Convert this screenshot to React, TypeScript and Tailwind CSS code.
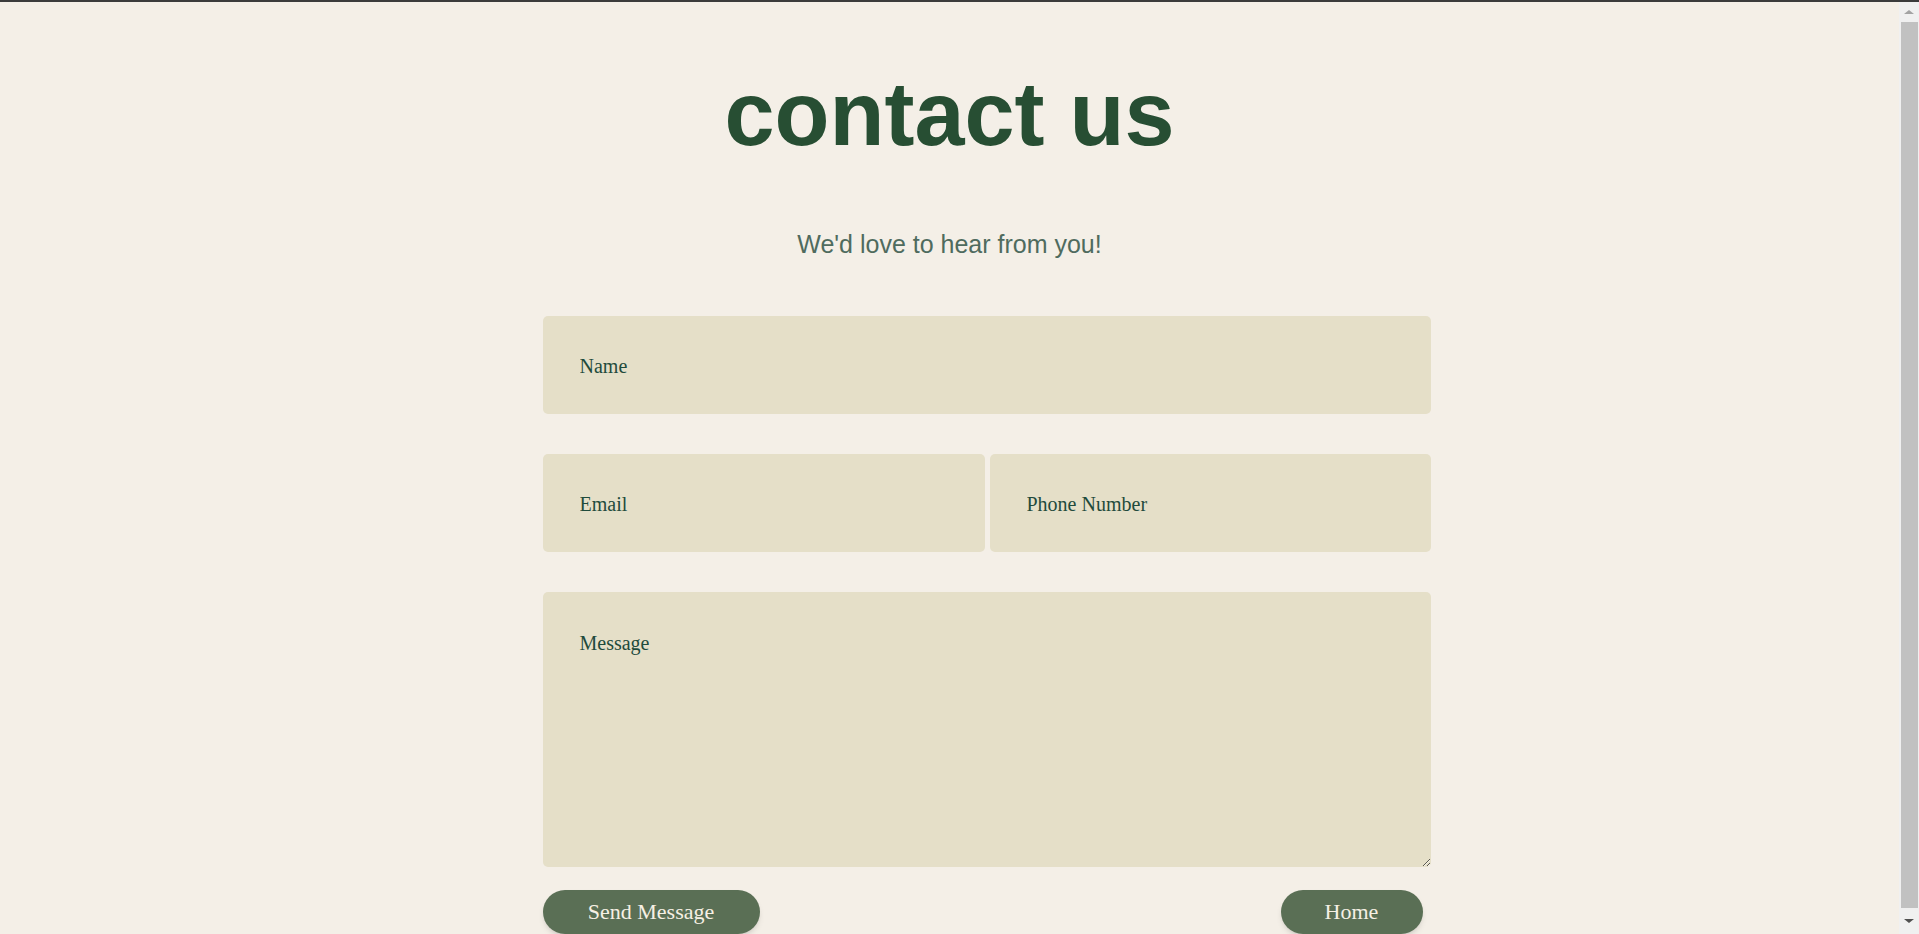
export default function App() {
  return (
    <div className="min-h-screen bg-[#f4efe7] border-t-2 border-[#3b3b3b] pb-6">
      <div className="mr-[20px]">
        <div className="flex flex-col items-center pt-[62px]">
          <h1 className="text-[90px] leading-[100px] font-bold text-[#274e33] font-['Liberation_Sans',Arial,sans-serif]">
            contact us
          </h1>
          <p className="mt-[65px] text-[25px] leading-[30px] text-[#4f6b5e] font-['Liberation_Sans',Arial,sans-serif]">
            We'd love to hear from you!
          </p>
        </div>

        <form className="mx-auto mt-[57px] w-[814px] font-['Liberation_Serif','Times_New_Roman',serif]">
          <input
            type="text"
            placeholder="Name"
            className="block w-[888px] h-[98px] px-[37px] pt-[2px] rounded-[5px] bg-[#e5dfc8] text-[20px] text-[#1f4b3c] placeholder:text-[#1f4b3c] outline-none"
          />
          <div className="flex gap-[5px] mt-[40px] w-[888px]">
            <input
              type="text"
              placeholder="Email"
              className="block w-[442px] h-[98px] px-[37px] pt-[2px] rounded-[5px] bg-[#e5dfc8] text-[20px] text-[#1f4b3c] placeholder:text-[#1f4b3c] outline-none"
            />
            <input
              type="text"
              placeholder="Phone Number"
              className="block w-[441px] h-[98px] px-[37px] pt-[2px] rounded-[5px] bg-[#e5dfc8] text-[20px] text-[#1f4b3c] placeholder:text-[#1f4b3c] outline-none"
            />
          </div>
          <textarea
            placeholder="Message"
            className="block mt-[40px] w-[888px] h-[275px] px-[37px] pt-[40px] rounded-[5px] bg-[#e5dfc8] text-[20px] leading-[23px] text-[#1f4b3c] placeholder:text-[#1f4b3c] outline-none"
          />
          <div className="flex justify-between items-center mt-[23px] w-[880px]">
            <button
              type="button"
              className="h-[44px] w-[217px] pb-[2px] rounded-full bg-[#5a6f55] text-[22px] text-[#f6f0e4] shadow-md"
            >
              Send Message
            </button>
            <button
              type="button"
              className="h-[44px] w-[142px] pb-[2px] rounded-full bg-[#5a6f55] text-[22px] text-[#f6f0e4] shadow-md"
            >
              Home
            </button>
          </div>
        </form>
      </div>

      {/* browser scrollbar look-alike */}
      <div className="fixed top-[2px] right-0 bottom-0 w-[20px] bg-[#f0f0f0] flex flex-col items-center">
        <div className="h-[20px] flex items-center justify-center">
          <div className="w-0 h-0 border-x-[5px] border-x-transparent border-b-[4px] border-b-[#a3a3a3]" />
        </div>
        <div className="flex-1 w-[17px] bg-[#c1c1c1]" />
        <div className="h-[26px] flex items-center justify-center">
          <div className="w-0 h-0 border-x-[5px] border-x-transparent border-t-[4px] border-t-[#505050]" />
        </div>
      </div>
    </div>
  );
}
